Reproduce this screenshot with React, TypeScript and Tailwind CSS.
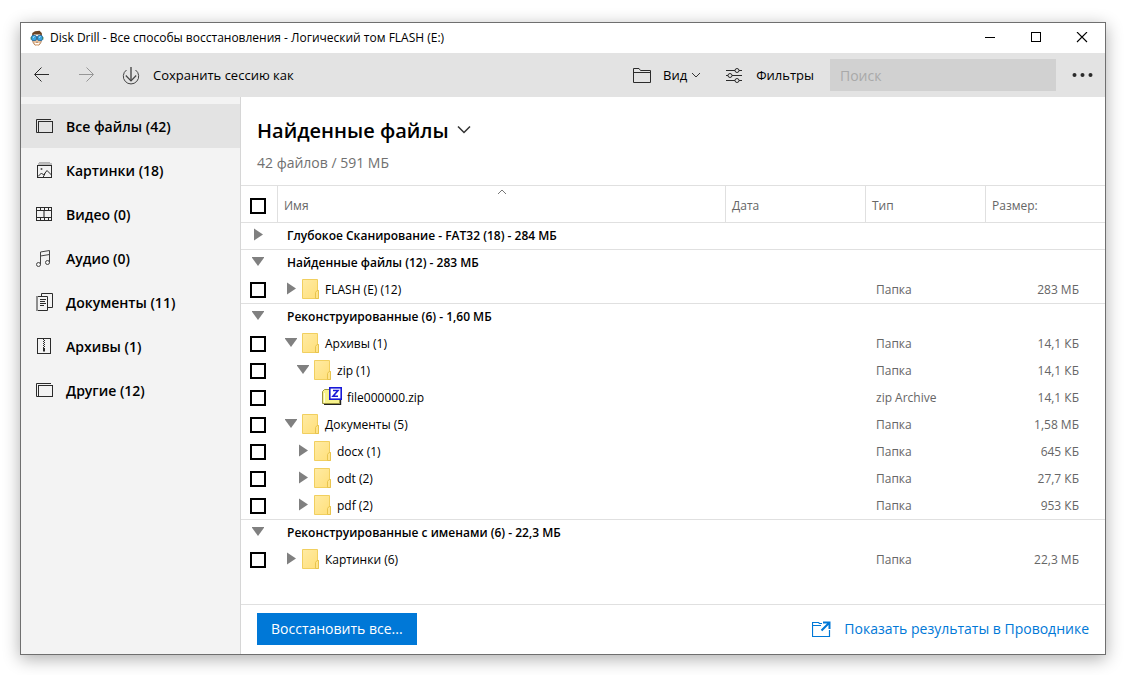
import type { ReactNode } from "react";

type Row =
  | { kind: "group"; name: string; open: boolean }
  | { kind: "folder"; name: string; open: boolean; level: 0 | 1; type: string; size: string }
  | { kind: "file"; name: string; type: string; size: string };

const rows: Row[] = [
  { kind: "group", name: "Глубокое Сканирование - FAT32 (18) - 284 МБ", open: false },
  { kind: "group", name: "Найденные файлы (12) - 283 МБ", open: true },
  { kind: "folder", name: "FLASH (E) (12)", open: false, level: 0, type: "Папка", size: "283 МБ" },
  { kind: "group", name: "Реконструированные (6) - 1,60 МБ", open: true },
  { kind: "folder", name: "Архивы (1)", open: true, level: 0, type: "Папка", size: "14,1 КБ" },
  { kind: "folder", name: "zip (1)", open: true, level: 1, type: "Папка", size: "14,1 КБ" },
  { kind: "file", name: "file000000.zip", type: "zip Archive", size: "14,1 КБ" },
  { kind: "folder", name: "Документы (5)", open: true, level: 0, type: "Папка", size: "1,58 МБ" },
  { kind: "folder", name: "docx (1)", open: false, level: 1, type: "Папка", size: "645 КБ" },
  { kind: "folder", name: "odt (2)", open: false, level: 1, type: "Папка", size: "27,7 КБ" },
  { kind: "folder", name: "pdf (2)", open: false, level: 1, type: "Папка", size: "953 КБ" },
  { kind: "group", name: "Реконструированные с именами (6) - 22,3 МБ", open: true },
  { kind: "folder", name: "Картинки (6)", open: false, level: 0, type: "Папка", size: "22,3 МБ" },
];

function Icon({ children }: { children: ReactNode }) {
  return (
    <svg width="20" height="20" viewBox="0 0 20 20" fill="none" stroke="#2b2b2b" aria-hidden="true" className="shrink-0">
      {children}
    </svg>
  );
}

const StackIcon = () => (
  <Icon>
    <path d="M2.5 16.5H.5V3.5H15" />
    <rect x="2.5" y="5.5" width="14" height="11" />
  </Icon>
);

const nav: { label: string; icon: ReactNode }[] = [
  { label: "Все файлы (42)", icon: <StackIcon /> },
  {
    label: "Картинки (18)",
    icon: (
      <Icon>
        <path d="M3 2.5H14" stroke="#b5b5b5" />
        <path d="M2 4H16" stroke="#888" />
        <rect x="1.5" y="5.500" width="14" height="12" />
        <path d="M2 16.500L5.500 13L7.500 15L11 10.500L15.500 15M7 17.500L9 13.500" />
        <circle cx="5.500" cy="9" r="1" fill="#555" stroke="none" />
      </Icon>
    ),
  },
  {
    label: "Видео (0)",
    icon: (
      <Icon>
        <rect x="0.5" y="3.5" width="15" height="13" />
        <path d="M0 6.5H16M0 13.5H16" />
        <path d="M4.5 3V7M8.5 3V7M12.5 3V7M4.5 13V17M8.5 13V17M12.5 13V17" />
        <path d="M8 7V13" stroke="#888" strokeWidth="2" />
      </Icon>
    ),
  },
  {
    label: "Аудио (0)",
    icon: (
      <Icon>
        <path d="M4.5 16.5V4L13.5 2.5V14.500M4.500 8L13.500 6.500" stroke="#444" />
        <circle cx="2.500" cy="16.500" r="2" stroke="#444" />
        <circle cx="11.500" cy="14.500" r="2" stroke="#444" />
      </Icon>
    ),
  },
  {
    label: "Документы (11)",
    icon: (
      <Icon>
        <path d="M5.5 4V1.5H16.5V15.5H12" />
        <path d="M2 4.5H11.5V18.5H2" />
        <path d="M1 4.5V19" strokeWidth="2" strokeDasharray="1 1" />
        <path d="M4 7.5H10M4 9.5H9M4 11.5H10M4 13.5H8" />
      </Icon>
    ),
  },
  {
    label: "Архивы (1)",
    icon: (
      <Icon>
        <rect x="1.5" y="2.5" width="13" height="15" />
        <path d="M7.5 3V13" strokeDasharray="1 1" />
        <path d="M8.5 4V13" strokeDasharray="1 1" />
        <path d="M8 12V15.5" strokeWidth="2" />
      </Icon>
    ),
  },
  { label: "Другие (12)", icon: <StackIcon /> },
];

function Toggle({ open, label }: { open: boolean; label: string }) {
  return (
    <button type="button" aria-expanded={open} aria-label={label} className="block shrink-0">
      <svg width="12" height="14" viewBox="0 0 12 14" fill="#808080" aria-hidden="true">
        {open ? <path d="M-.5 2H12.500L6 11Z" /> : <path d="M2 .5L11 6.500L2 12.500Z" />}
      </svg>
    </button>
  );
}

function Folder() {
  return (
    <svg width="17" height="20" viewBox="0 0 17 20" aria-hidden="true" className="shrink-0">
      <defs>
        <linearGradient id="folder" x1="0" y1="0" x2="1" y2="1">
          <stop offset="0" stopColor="#ffeba4" />
          <stop offset="1" stopColor="#ffdf79" />
        </linearGradient>
      </defs>
      <path d="M.5 .5H15.500V11.500H16.500V19.500H.5Z" fill="url(#folder)" stroke="#f1cf5f" />
      <path d="M13.500 19.500V13.500L15 11.500H16.500V19.500Z" fill="#ffe48c" stroke="#e8c44e" />
    </svg>
  );
}

function ZipFile() {
  return (
    <svg width="20" height="20" viewBox="0 0 20 20" aria-hidden="true" className="shrink-0">
      <path d="M2 17.300H18.500V12" fill="none" stroke="#222" strokeWidth="1.400" />
      <path d="M.5 4.500L2.500 2.500H7L8.500 4.500H17.500V16.500H.5Z" fill="#f7f28c" stroke="#9a9440" />
      <path d="M2.500 6V15.500" stroke="#fffde0" />
      <rect x="7.800" y=".8" width="11.400" height="11.400" fill="#fff" stroke="#1818d8" strokeWidth="1.600" />
      <path d="M11 3.500H16L11 9.300H16" fill="none" stroke="#1818d8" strokeWidth="1.600" />
    </svg>
  );
}

function Check({ label }: { label: string }) {
  return (
    <input
      type="checkbox"
      aria-label={label}
      className="block size-4 shrink-0 appearance-none border-2 border-black bg-white checked:bg-black"
    />
  );
}

function Logo() {
  return (
    <svg width="14" height="17" viewBox="0 0 14 17" aria-hidden="true" className="shrink-0">
      <path d="M2.500 6H11.500V11L9.500 15L7 16L4.500 15L2.500 11Z" fill="#e9c3a0" />
      <path d="M2 6.500L2.300 3L5 1.200L9.500 .8L11.800 3L12 6.500L10 4.500H4Z" fill="#6b4423" />
      <path d="M2.500 10.500L3.500 13.500L5.500 15.500M11.500 10.500L10.500 13.500L8.500 15.500" fill="none" stroke="#b98e6b" />
      <rect x="1.500" y="5.500" width="5" height="5" rx="1.500" fill="#3aa5e0" stroke="#1b5f96" strokeWidth=".8" />
      <rect x="7.500" y="5.500" width="5" height="5" rx="1.500" fill="#3aa5e0" stroke="#1b5f96" strokeWidth=".8" />
      <path d="M3 7.500L4.500 6.500M9 7.500L10.500 6.500" stroke="#c5ecff" />
      <path d="M1 7V9.500M13 7V9.500" stroke="#3f8a4e" strokeWidth=".8" />
      <path d="M5 13.500H9" stroke="#fff" />
      <path d="M6 12.300H8" stroke="#9b6b4c" strokeWidth=".7" />
    </svg>
  );
}

export default function App() {
  return (
    <div className="flex min-h-screen flex-col bg-white pt-[22px] pr-[22px] pb-5 pl-5 font-['Open_Sans','Noto_Sans',sans-serif] text-black">
      <div className="flex flex-1 flex-col border border-[#6f6f6f] bg-white shadow-[0_4px_16px_rgba(0,0,0,0.32)]">
        <header className="flex h-[30px] items-center pl-[9px]">
          <Logo />
          <h1 className="ml-1.5 flex-1 text-xs">Disk Drill - Все способы восстановления - Логический том FLASH (E:)</h1>
          <div className="flex items-center">
            <button type="button" aria-label="Свернуть" className="flex h-[30px] w-[46px] items-center justify-center">
              <svg width="12" height="12" viewBox="0 0 12 12" stroke="#000"><path d="M1 5.500H11" /></svg>
            </button>
            <button type="button" aria-label="Развернуть" className="flex h-[30px] w-[46px] items-center justify-center">
              <svg width="12" height="12" viewBox="0 0 12 12" fill="none" stroke="#000"><rect x="1.500" y=".5" width="9" height="9" /></svg>
            </button>
            <button type="button" aria-label="Закрыть" className="flex h-[30px] w-[46px] items-center justify-center">
              <svg width="12" height="12" viewBox="0 0 12 12" stroke="#000" strokeWidth="1.100"><path d="M1 0L11 10M11 0L1 10" /></svg>
            </button>
          </div>
        </header>

        <div className="flex h-11 items-center bg-[#e3e3e3] pl-3 text-[13px]">
          <button type="button" aria-label="Назад" className="mr-6">
            <Icon><path d="M16 9.500H2M8.500 2.500L1.500 9.500L8.500 16.500" /></Icon>
          </button>
          <button type="button" aria-label="Вперёд" className="mr-6" disabled>
            <Icon><path d="M2 9.500H16M9.500 2.500L16.500 9.500L9.500 16.500" stroke="#969696" /></Icon>
          </button>
          <button type="button" className="flex items-center gap-3">
            <Icon>
              <path d="M5.500 5A7.700 7.700 0 1 0 14.500 5" stroke="#444" />
              <path d="M10 2V16" stroke="#777" strokeWidth="2" />
              <path d="M4.800 10.500L10 16L15.200 10.500" stroke="#444" strokeWidth="1.200" />
            </Icon>
            <span className="pt-0.5">Сохранить сессию как</span>
          </button>
          <div className="ml-auto flex items-center">
            <button type="button" className="flex items-center">
              <Icon>
                <path d="M1.500 17.500V3.500H7L8.500 5.500H18.500V17.500ZM1.500 7.500H18.500" />
              </Icon>
              <span className="ml-[11px] pt-0.5">Вид</span>
              <svg width="10" height="6" viewBox="0 0 10 6" fill="none" stroke="#333" className="ml-1"><path d="M1 1L5 5L9 1" /></svg>
            </button>
            <button type="button" className="ml-6 flex items-center gap-[11px]">
              <Icon>
                <path d="M1 5.500H10M14 5.500H17M1 10.500H3M7 10.500H17M1 15.500H10M14 15.500H17" />
                <circle cx="12" cy="5.500" r="2" />
                <circle cx="5" cy="10.500" r="2" />
                <circle cx="12" cy="15.500" r="2" />
              </Icon>
              <span className="pt-0.5">Фильтры</span>
            </button>
            <input
              type="search"
              aria-label="Поиск"
              placeholder="Поиск"
              className="ml-4 h-8 w-[226px] bg-[#d1d1d1] px-2.5 text-sm outline-none placeholder:text-[#a9a9a9]"
            />
            <button type="button" aria-label="Ещё" className="mr-3 ml-4">
              <svg width="21" height="20" viewBox="0 0 21 20" fill="#2b2b2b"><circle cx="2.500" cy="10" r="2" /><circle cx="10.500" cy="10" r="2" /><circle cx="18.500" cy="10" r="2" /></svg>
            </button>
          </div>
        </div>

        <div className="flex flex-1">
          <nav className="w-[220px] shrink-0 border-r border-[#d6d6d6] bg-[#f3f3f3] pt-[7px]">
            <ul>
              {nav.map((item, i) => (
                <li key={item.label}>
                  <a
                    href="#"
                    aria-current={i === 0 ? "page" : undefined}
                    className="flex h-11 items-center gap-2.5 pl-[15px] text-sm font-semibold aria-[current=page]:bg-[#e3e3e3]"
                  >
                    {item.icon}
                    <span className="pt-0.5">{item.label}</span>
                  </a>
                </li>
              ))}
            </ul>
          </nav>

          <main className="flex min-w-0 flex-1 flex-col">
            <div className="flex h-[88px] flex-col pt-5 pl-4">
              <h2>
                <button type="button" className="flex items-center gap-2 text-xl leading-7 font-semibold">
                  Найденные файлы
                  <svg width="14" height="10" viewBox="0 0 14 10" fill="none" stroke="#333" strokeWidth="1.500"><path d="M1 .5L7 6.500L13 .5" /></svg>
                </button>
              </h2>
              <p className="mt-2 text-sm text-[#707070]">42 файлов / 591 МБ</p>
            </div>

            <table className="w-full table-fixed border-separate border-spacing-0 text-left text-xs">
              <colgroup>
                <col className="w-9" />
                <col />
                <col className="w-[140px]" />
                <col className="w-[120px]" />
                <col className="w-[120px]" />
              </colgroup>
              <thead>
                <tr className="h-[37px] text-[#666]">
                  <th className="border-t border-[#e0e0e0] p-0 pt-1 pl-[9px]"><Check label="Выбрать все" /></th>
                  <th className="relative border-t border-l border-[#e0e0e0] p-0 pt-1 pl-1.5 font-normal" aria-sort="ascending">
                    Имя
                    <svg width="10" height="6" viewBox="0 0 10 6" fill="none" stroke="#777" className="absolute top-[3px] left-1/2 -ml-[5px]"><path d="M1 5L5 1L9 5" /></svg>
                  </th>
                  <th className="border-t border-l border-[#e0e0e0] p-0 pt-1 pl-1.5 font-normal">Дата</th>
                  <th className="border-t border-l border-[#e0e0e0] p-0 pt-1 pl-1.5 font-normal">Тип</th>
                  <th className="border-t border-l border-[#e0e0e0] p-0 pt-1 pl-1.5 font-normal">Размер:</th>
                </tr>
              </thead>
              <tbody>
                {rows.map((row) =>
                  row.kind === "group" ? (
                    <tr key={row.name} className="h-[27px]">
                      <td className="border-t border-[#e0e0e0] p-0 pb-0.5 pl-[11px]"><Toggle open={row.open} label={row.name} /></td>
                      <th colSpan={4} scope="rowgroup" className="border-t border-[#e0e0e0] p-0 pl-2.5 font-semibold">{row.name}</th>
                    </tr>
                  ) : (
                    <tr key={row.name} className="h-[27px]">
                      <td className="p-0 pt-px pl-[9px]"><Check label={row.name} /></td>
                      <td className="p-0 pb-0.5">
                        {row.kind === "folder" ? (
                          <div className={row.level === 0 ? "flex items-center pl-2" : "flex items-center pl-5"}>
                            <Toggle open={row.open} label={row.name} />
                            <span className="ml-[5px] flex items-center gap-1.5"><Folder /><span className="pt-0.5">{row.name}</span></span>
                          </div>
                        ) : (
                          <div className="flex items-center gap-[5px] pl-[45px]"><ZipFile /><span className="pt-0.5">{row.name}</span></div>
                        )}
                      </td>
                      <td className="p-0" />
                      <td className="p-0 pl-[11px] text-[#666]">{row.type}</td>
                      <td className="p-0 pr-[26px] text-right text-[#666]">{row.size}</td>
                    </tr>
                  ),
                )}
              </tbody>
            </table>

            <footer className="mt-auto flex h-[50px] items-center justify-between border-t border-[#e0e0e0] px-4 pb-0.5 text-sm">
              <button type="button" className="h-8 bg-[#0078d7] px-3.5 text-white">Восстановить все...</button>
              <a href="#" className="flex items-center gap-3 text-[#0078d7]">
                <svg width="20" height="18" viewBox="0 0 20 18" fill="none" stroke="#0078d7" aria-hidden="true">
                  <path d="M10 3.500H7.500L6.500 2.500H.5V16.500H17.500V10M.5 5.500H9" strokeWidth="1.200" />
                  <path d="M9.500 10.500L17 3M11 2.500H17.500V9" strokeWidth="2" />
                </svg>
                Показать результаты в Проводнике
              </a>
            </footer>
          </main>
        </div>
      </div>
    </div>
  );
}
